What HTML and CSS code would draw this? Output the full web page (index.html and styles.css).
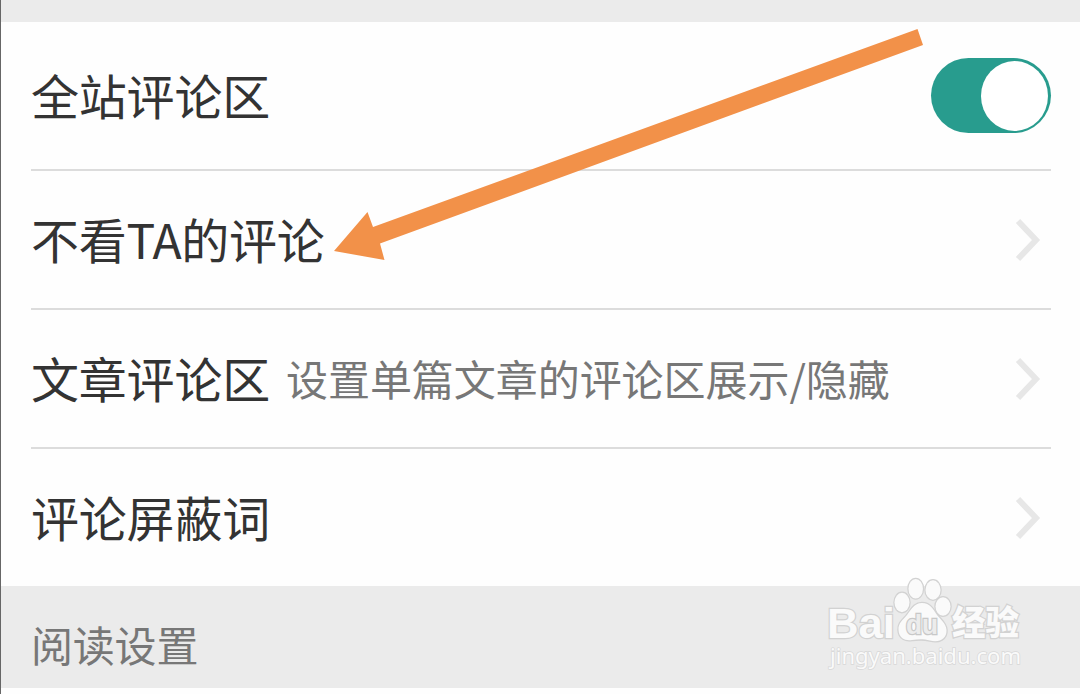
FILE: index.html
```
<!DOCTYPE html>
<html lang="zh-CN">
<head>
    <meta charset="UTF-8">
    <meta name="viewport" content="width=device-width, initial-scale=1.0">
    <title>评论设置</title>
    <link rel="stylesheet" href="styles.css">
</head>
<body>
    <div class="page">
        <div class="band"></div>
        <div class="list">
            <div class="row row-first">
                <span class="title">全站评论区</span>
                <div class="switch"><div class="knob"></div></div>
            </div>
            <div class="row">
                <span class="title">不看<span class="latin">TA</span>的评论</span>
                <svg class="chevron" viewBox="0 0 26 44"><path d="M3 3 L21 22 L3 41"/></svg>
            </div>
            <div class="row">
                <span class="title">文章评论区</span>
                <span class="desc">设置单篇文章的评论区展示/隐藏</span>
                <svg class="chevron" viewBox="0 0 26 44"><path d="M3 3 L21 22 L3 41"/></svg>
            </div>
            <div class="row">
                <span class="title">评论屏蔽词</span>
                <svg class="chevron" viewBox="0 0 26 44"><path d="M3 3 L21 22 L3 41"/></svg>
            </div>
        </div>
        <div class="section">阅读设置</div>

        <svg class="arrow" viewBox="0 0 1080 694">
            <path d="M334 251 L367.5 212 L373 227 L917.500 29 L923 45 L380 243.500 L384.500 260 Z"/>
        </svg>

        <svg class="watermark" viewBox="0 0 210 115">
            <text class="logo" x="7" y="78" textLength="68" lengthAdjust="spacingAndGlyphs">Bai</text>
            <g class="paw">
                <ellipse cx="82" cy="42.500" rx="7.500" ry="9.700"/>
                <ellipse cx="95.700" cy="28.700" rx="7.200" ry="9.800"/>
                <ellipse cx="113" cy="30" rx="7.500" ry="9.700"/>
                <ellipse cx="123" cy="46.500" rx="7.500" ry="9.300"/>
                <path d="M102 43 C94 43 91 50 87 55 C83 60 78 63 78.500 70 C79 79 86 81 92 80 C99 79 104 79 110 80.500 C119 83 127 79 126.500 70 C126 63 120 59 117 55 C113 49 110 43 102 43 Z"/>
            </g>
            <text class="du" x="86" y="73.500" textLength="32" lengthAdjust="spacingAndGlyphs">du</text>
            <text class="exp" x="132" y="75" textLength="67" lengthAdjust="spacingAndGlyphs">经验</text>
            <text class="url" x="10" y="104" textLength="191" lengthAdjust="spacingAndGlyphs">jingyan.baidu.com</text>
        </svg>
    </div>
</body>
</html>
```
FILE: styles.css
```
body {
    margin: 0;
    background: #fefefe;
    font-family: "Noto Sans CJK SC", sans-serif;
}

.page {
    position: relative;
    box-sizing: border-box;
    width: 1080px;
    height: 694px;
    border-left: 1px solid #666;
    overflow: hidden;
}

.band {
    height: 22px;
    background: #ebebeb;
}

.list {
    padding: 0 29px 0 30px;
}

.row {
    display: flex;
    align-items: center;
    box-sizing: border-box;
    height: 139px;
    border-bottom: 2px solid #dcdcdc;
}

.row-first {
    height: 149px;
}

.row:last-child {
    height: 137px;
    border-bottom: none;
}

.title {
    padding-bottom: 3px;
    font-size: 48px;
    line-height: 70px;
    letter-spacing: -0.2px;
    color: #333;
    white-space: nowrap;
}

.latin {
    letter-spacing: -0.6px;
}

.desc {
    margin-left: 16px;
    padding-bottom: 2px;
    font-size: 42px;
    line-height: 62px;
    letter-spacing: -0.05px;
    color: #777;
    white-space: nowrap;
}

.switch {
    display: flex;
    align-items: center;
    justify-content: flex-end;
    box-sizing: border-box;
    width: 120px;
    height: 75px;
    margin-left: auto;
    padding-right: 3px;
    border-radius: 38px;
    background: #289c8e;
}

.knob {
    width: 67px;
    height: 70px;
    border-radius: 50%;
    background: #fff;
}

.chevron {
    width: 26px;
    height: 44px;
    margin-left: auto;
    margin-right: 10px;
    fill: none;
    stroke: #e7e7e7;
    stroke-width: 6;
}

.section {
    box-sizing: border-box;
    height: 102px;
    padding: 27px 30px 0;
    background: #ebebeb;
    color: #777;
    font-size: 42px;
    line-height: 62px;
    letter-spacing: -0.2px;
}

/* pointer drawn over the rows */
.arrow {
    position: absolute;
    top: 0;
    left: -1px;
    width: 1080px;
    height: 694px;
    fill: #f29149;
}

.watermark {
    position: absolute;
    top: 560px;
    left: 819px;
    width: 210px;
    height: 115px;
    fill: #fafafa;
    stroke: #d2d2d2;
    stroke-width: 1.5;
    paint-order: stroke;
}

.logo {
    font-family: "Liberation Sans", sans-serif;
    font-size: 43px;
    font-weight: bold;
    stroke-width: 2.5;
}

.paw {
    stroke-width: 2.5;
}

.du {
    font-family: "Liberation Sans", sans-serif;
    font-size: 27px;
    font-weight: bold;
    fill: #ececec;
    stroke: #c8c8c8;
    stroke-width: 2.5;
}

.exp {
    font-size: 34px;
    font-weight: 900;
    stroke-width: 2.5;
}

.url {
    font-family: "Noto Sans", sans-serif;
    font-size: 22px;
    stroke: #d8d8d8;
    stroke-width: 1.5;
}
```
